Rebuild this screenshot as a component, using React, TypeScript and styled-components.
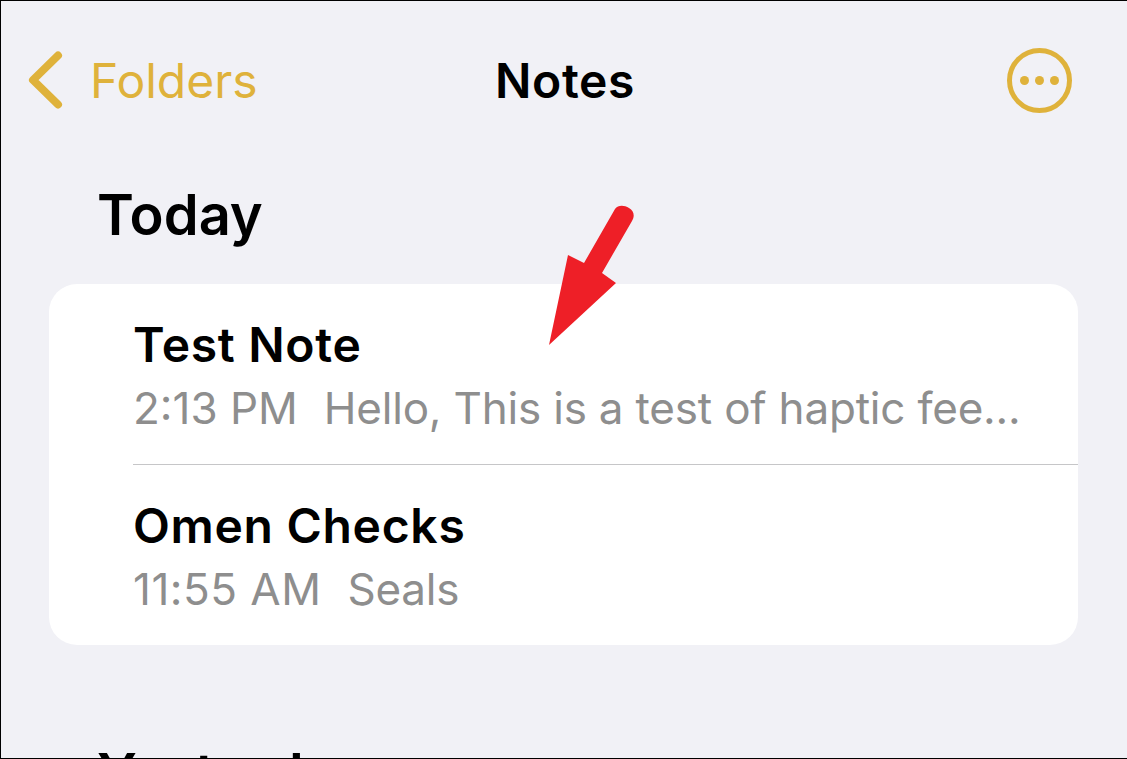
import React from 'react'
import styled, { createGlobalStyle } from 'styled-components'

const GlobalStyle = createGlobalStyle`
  html, body {
    margin: 0;
    padding: 0;
    background: #f1f1f6;
  }
  * {
    box-sizing: border-box;
  }
`

const Screen = styled.div`
  position: relative;
  width: 1127px;
  height: 759px;
  overflow: hidden;
  background: #f1f1f6;
  border-top: 1px solid #000;
  border-left: 1px solid #000;
  border-bottom: 1px solid #000;
  font-family: Inter, "Liberation Sans", sans-serif;
`

const NavBar = styled.div`
  display: grid;
  grid-template-columns: 1fr auto 1fr;
  align-items: center;
  height: 181px;
  padding: 0 54px 23px 56px;
`

const BackLink = styled.div`
  display: flex;
  align-items: center;
  gap: 27px;
  margin-left: -30px;
  color: #dfb23b;
  font-size: 48px;
`

const NavTitle = styled.div`
  font-size: 48px;
  font-weight: 600;
  letter-spacing: 0.6px;
  color: #000;
`

const NavActions = styled.div`
  display: flex;
  justify-content: flex-end;
`

const SectionTitle = styled.h2`
  margin: 0;
  padding-left: 96px;
  font-size: 56px;
  line-height: 66px;
  font-weight: 600;
  color: #000;
`

const Card = styled.div`
  margin: 36px 49px 0 48px;
  background: #fff;
  border-radius: 28px;
  padding-left: 84px;
`

const Row = styled.div<{ $last?: boolean }>`
  height: ${p => (p.$last ? 180 : 181)}px;
  padding-top: 33px;
  border-bottom: ${p => (p.$last ? 'none' : '1px solid #c6c6c8')};
`

const RowTitle = styled.div`
  font-size: 48px;
  line-height: 56px;
  font-weight: 600;
  letter-spacing: 0.7px;
  color: #000;
`

const RowMeta = styled.div`
  display: flex;
  gap: 26px;
  margin-top: 10px;
  font-size: 44px;
  line-height: 50px;
  letter-spacing: -0.2px;
  color: #8e8e8e;
`

const Time = styled.span<{ $spacing: number }>`
  letter-spacing: ${p => p.$spacing}px;
`

const NextSection = styled(SectionTitle)`
  margin-top: 96px;
`

const Arrow = styled.svg`
  position: absolute;
  left: -1px;
  top: -1px;
  pointer-events: none;
`

export default function App() {
  return (
    <Screen>
      <GlobalStyle />
      <NavBar>
        <BackLink>
          <svg width="36" height="60" viewBox="0 0 36 60">
            <path d="M31 5.5 L6 30 L31 54.5" fill="none" stroke="#dfb23b" strokeWidth="8" strokeLinecap="round" strokeLinejoin="round" />
          </svg>
          Folders
        </BackLink>
        <NavTitle>Notes</NavTitle>
        <NavActions>
          <svg width="66" height="66" viewBox="0 0 66 66">
            <circle cx="32.5" cy="33.5" r="30" fill="none" stroke="#dfb23b" strokeWidth="5" />
            <circle cx="17.5" cy="33.5" r="4.5" fill="#dfb23b" />
            <circle cx="32.5" cy="33.5" r="4.5" fill="#dfb23b" />
            <circle cx="47.5" cy="33.5" r="4.5" fill="#dfb23b" />
          </svg>
        </NavActions>
      </NavBar>
      <SectionTitle>Today</SectionTitle>
      <Card>
        <Row>
          <RowTitle>Test Note</RowTitle>
          <RowMeta>
            <Time $spacing={0}>2:13 PM</Time>
            <span>Hello, This is a test of haptic fee...</span>
          </RowMeta>
        </Row>
        <Row $last>
          <RowTitle>Omen Checks</RowTitle>
          <RowMeta>
            <Time $spacing={0.5}>11:55 AM</Time>
            <span>Seals</span>
          </RowMeta>
        </Row>
      </Card>
      <NextSection>Yesterday</NextSection>
      <Arrow width="1127" height="759" viewBox="0 0 1127 759">
        <path
          d="M615 209 C618 205 624 205 629 208 C634 211 635 216 632 221 L602 273 L616 283 L549 345 L568 255 L584 263 Z"
          fill="#ee1f27"
        />
      </Arrow>
    </Screen>
  )
}
